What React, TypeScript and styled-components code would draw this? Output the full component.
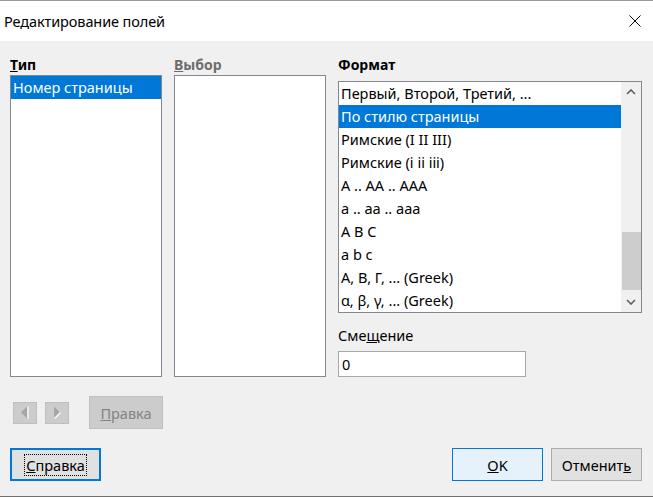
import styled, { createGlobalStyle } from "styled-components";

const GlobalStyle = createGlobalStyle`
  html, body {
    margin: 0;
    padding: 0;
    background: #f0f0f0;
  }
  body {
    font-family: "Noto Sans", "Open Sans", "Liberation Sans", sans-serif;
    color: #000;
  }
`;

const Window = styled.div`
  width: 653px;
  height: 497px;
  box-sizing: border-box;
  border-top: 1px solid #9a9a9a;
  border-bottom: 1px solid #707070;
  margin-bottom: 1px;
  display: flex;
  flex-direction: column;
  background: #f0f0f0;
  overflow: hidden;
`;

const TitleBar = styled.div`
  height: 40px;
  background: #fff;
  display: flex;
  align-items: center;
  justify-content: space-between;
  padding: 0 12px 0 4px;
  flex-shrink: 0;
`;

const Title = styled.div`
  font-size: 14.5px;
  letter-spacing: -0.1px;
  color: #000;
`;

const Body = styled.div`
  flex: 1;
  display: flex;
  flex-direction: column;
  padding: 14px 11px 0 10px;
`;

const Columns = styled.div`
  display: grid;
  grid-template-columns: 152px 152px 304px;
  column-gap: 12px;
`;

const Column = styled.div`
  display: flex;
  flex-direction: column;
`;

const Label = styled.div<{ $disabled?: boolean; $bold?: boolean }>`
  height: 20px;
  line-height: 20px;
  font-size: 14px;
  font-weight: ${(p) => (p.$bold ? 700 : 400)};
  color: ${(p) => (p.$disabled ? "#6d6d6d" : "#000")};
`;

const ListBox = styled.div<{ $height: number; $gap?: number }>`
  box-sizing: border-box;
  height: ${(p) => p.$height}px;
  margin-top: ${(p) => p.$gap ?? 0}px;
  background: #fff;
  border: 1px solid #828790;
  display: flex;
  overflow: hidden;
`;

const Items = styled.div`
  flex: 1;
  display: flex;
  flex-direction: column;
`;

const Item = styled.div<{ $selected?: boolean; $h: number }>`
  height: ${(p) => p.$h}px;
  line-height: ${(p) => p.$h}px;
  padding-left: 2px;
  font-size: 14.5px;
  white-space: nowrap;
  background: ${(p) => (p.$selected ? "#0078d7" : "transparent")};
  color: ${(p) => (p.$selected ? "#fff" : "#000")};
`;

const ScrollBar = styled.div`
  width: 20px;
  background: #f0f0f0;
  display: flex;
  flex-direction: column;
`;

const ScrollArrow = styled.div`
  height: 20px;
  display: flex;
  align-items: center;
  justify-content: center;
`;

const Track = styled.div`
  flex: 1;
  display: flex;
  flex-direction: column;
  padding-left: 1px;
`;

const Thumb = styled.div<{ $offset: number; $size: number }>`
  margin-top: ${(p) => p.$offset}px;
  height: ${(p) => p.$size}px;
  background: #cdcdcd;
`;

const OffsetLabel = styled(Label)`
  margin-top: 12px;
  font-size: 14.5px;
`;

const Input = styled.div`
  box-sizing: border-box;
  margin-top: 6px;
  width: 188px;
  height: 26px;
  background: #fff;
  border: 1px solid #a8a8a8;
  font-size: 14.5px;
  line-height: 24px;
  padding-left: 3px;
`;

const NavRow = styled.div`
  margin-top: 19px;
  padding-left: 3px;
  display: flex;
  align-items: center;
`;

const NavButton = styled.div<{ $gap?: number }>`
  box-sizing: border-box;
  width: 24px;
  height: 22px;
  margin-left: ${(p) => p.$gap ?? 0}px;
  background: #cccccc;
  border: 1px solid #bfbfbf;
  display: flex;
  align-items: center;
  justify-content: center;
`;

const Button = styled.div<{ $variant?: "default" | "focus" | "primary" | "disabled" }>`
  box-sizing: border-box;
  width: ${(p) => (p.$variant === "disabled" ? 74 : 91)}px;
  height: 33px;
  display: flex;
  align-items: center;
  justify-content: center;
  font-size: 14.5px;
  background: ${(p) =>
    p.$variant === "primary" ? "#e5f1fb" : p.$variant === "disabled" ? "#cccccc" : "#e1e1e1"};
  border: ${(p) =>
    p.$variant === "focus"
      ? "2px solid #0078d7"
      : p.$variant === "primary"
      ? "1px solid #0078d7"
      : p.$variant === "disabled"
      ? "1px solid #bfbfbf"
      : "1px solid #adadad"};
  color: ${(p) => (p.$variant === "disabled" ? "#838383" : "#000")};
`;

const NavGap = styled.div`
  width: 20px;
`;

const FocusRect = styled.span`
  border: 1px dotted #000;
  padding: 0 1px;
  line-height: 20px;
`;

const BottomRow = styled.div`
  margin-top: 19px;
  display: flex;
  align-items: center;
  gap: 8px;
`;

const Spacer = styled.div`
  flex: 1;
`;

const CloseIcon = () => (
  <svg width="12" height="12" viewBox="0 0 12 12">
    <path d="M0.5 0.5 L11.5 11.5 M11.5 0.5 L0.5 11.5" stroke="#000" strokeWidth="1" fill="none" />
  </svg>
);

const Chevron = ({ up }: { up?: boolean }) => (
  <svg width="10" height="6" viewBox="0 0 10 6">
    <path
      d={up ? "M1 5 L5 1 L9 5" : "M1 1 L5 5 L9 1"}
      stroke="#606060"
      strokeWidth="1.6"
      fill="none"
    />
  </svg>
);

const ArrowLeft = () => (
  <svg width="10" height="13" viewBox="0 0 10 13">
    <path d="M7 0.5 L7 12.5 L1 6.5 Z" fill="#a6a6a6" />
    <path d="M8 0.5 L8 12.5" stroke="#ffffff" strokeWidth="1.2" />
  </svg>
);

const ArrowRight = () => (
  <svg width="10" height="13" viewBox="0 0 10 13">
    <path d="M2 0.5 L2 12.5 L8 6.5 Z" fill="#a6a6a6" />
    <path d="M2.5 12.5 L8.5 6.5" stroke="#ffffff" strokeWidth="1.2" />
  </svg>
);

const formats = [
  "Первый, Второй, Третий, ...",
  "По стилю страницы",
  "Римские (I II III)",
  "Римские (i ii iii)",
  "A .. AA .. AAA",
  "a .. aa .. aaa",
  "A B C",
  "a b c",
  "Α, Β, Γ, ... (Greek)",
  "α, β, γ, ... (Greek)",
];

export default function App() {
  return (
    <>
      <GlobalStyle />
      <Window>
        <TitleBar>
          <Title>Редактирование полей</Title>
          <CloseIcon />
        </TitleBar>
        <Body>
          <Columns>
            <Column>
              <Label $bold>
                <u>Т</u>ип
              </Label>
              <ListBox $height={302}>
                <Items>
                  <Item $selected $h={23}>
                    Номер страницы
                  </Item>
                </Items>
              </ListBox>
            </Column>
            <Column>
              <Label $bold $disabled>
                <u>В</u>ыбор
              </Label>
              <ListBox $height={302} />
            </Column>
            <Column>
              <Label $bold>Формат</Label>
              <ListBox $height={232} $gap={6}>
                <Items>
                  {formats.map((f, i) => (
                    <Item key={f} $h={23} $selected={i === 1}>
                      {f}
                    </Item>
                  ))}
                </Items>
                <ScrollBar>
                  <ScrollArrow>
                    <Chevron up />
                  </ScrollArrow>
                  <Track>
                    <Thumb $offset={130} $size={58} />
                  </Track>
                  <ScrollArrow>
                    <Chevron />
                  </ScrollArrow>
                </ScrollBar>
              </ListBox>
              <OffsetLabel>
                Сме<u>щ</u>ение
              </OffsetLabel>
              <Input>0</Input>
            </Column>
          </Columns>
          <NavRow>
            <NavButton>
              <ArrowLeft />
            </NavButton>
            <NavButton $gap={8}>
              <ArrowRight />
            </NavButton>
            <NavGap />
            <Button $variant="disabled">
              <span>
                <u>П</u>равка
              </span>
            </Button>
          </NavRow>
          <BottomRow>
            <Button $variant="focus">
              <FocusRect>
                <u>С</u>правка
              </FocusRect>
            </Button>
            <Spacer />
            <Button $variant="primary">
              <span>
                <u>O</u>K
              </span>
            </Button>
            <Button>
              <span>
                Отменит<u>ь</u>
              </span>
            </Button>
          </BottomRow>
        </Body>
      </Window>
    </>
  );
}
